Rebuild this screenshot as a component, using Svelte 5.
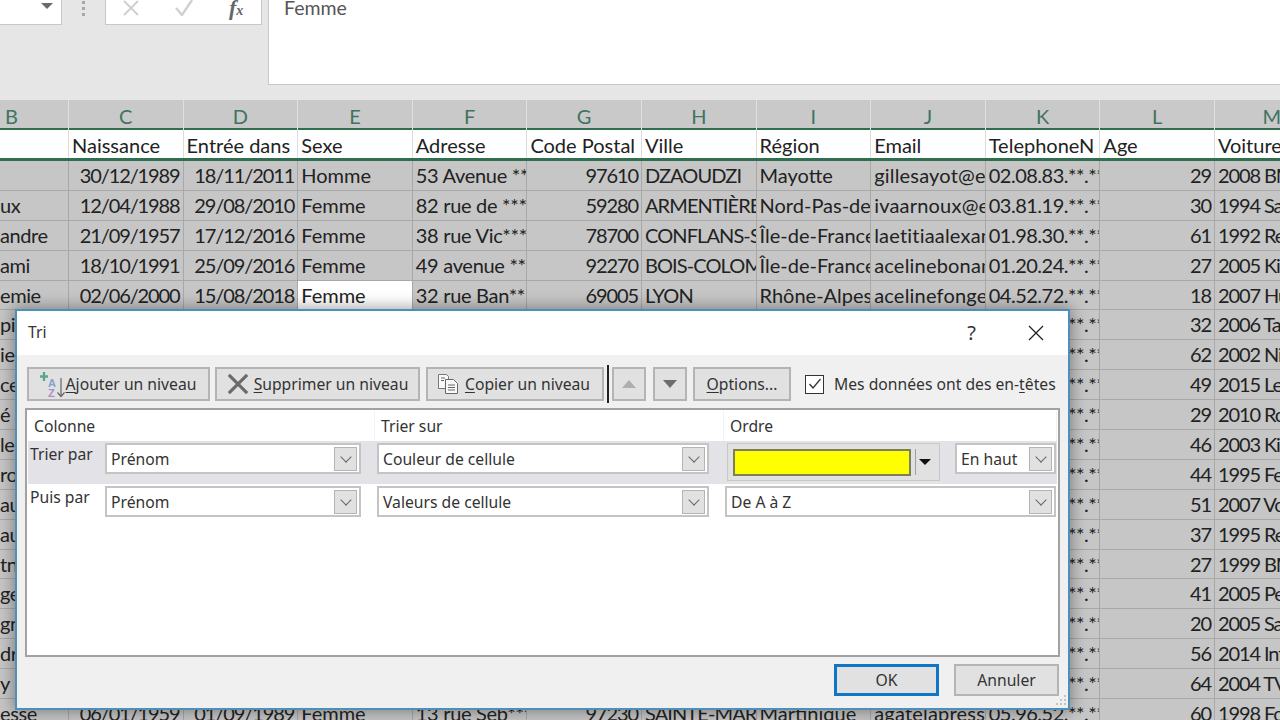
<script lang="ts">
  const cols = ['B', 'C', 'D', 'E', 'F', 'G', 'H', 'I', 'J', 'K', 'L', 'M'];
  const gridCols = '69px repeat(11, 114.6px)';

  const heads = ['', 'Naissance', 'Entrée dans', 'Sexe', 'Adresse', 'Code Postal', 'Ville', 'Région', 'Email', 'TelephoneN', 'Age', 'Voiture'];

  const rows = [
    ['', '30/12/1989', '18/11/2011', 'Homme', '53 Avenue ***', '97610', 'DZAOUDZI', 'Mayotte', 'gillesayot@example', '02.08.83.**.**', '29', '2008 BMW'],
    ['ux', '12/04/1988', '29/08/2010', 'Femme', '82 rue de ***', '59280', 'ARMENTIÈRES', 'Nord-Pas-de-Calais', 'ivaarnoux@example', '03.81.19.**.**', '30', '1994 Saab'],
    ['andre', '21/09/1957', '17/12/2016', 'Femme', '38 rue Vic***', '78700', 'CONFLANS-STE', 'Île-de-France', 'laetitiaalexandre', '01.98.30.**.**', '61', '1992 Renault'],
    ['ami', '18/10/1991', '25/09/2016', 'Femme', '49 avenue ***', '92270', 'BOIS-COLOMBES', 'Île-de-France', 'acelinebonami', '01.20.24.**.**', '27', '2005 Kia'],
    ['emie', '02/06/2000', '15/08/2018', 'Femme', '32 rue Ban**', '69005', 'LYON', 'Rhône-Alpes', 'acelinefongemie', '04.52.72.**.**', '18', '2007 Hummer'],
    ['pi', '', '', '', '', '', '', '', '', '02.00.00.**.**', '32', '2006 Tata'],
    ['ie', '', '', '', '', '', '', '', '', '02.00.00.**.**', '62', '2002 Nissan'],
    ['ce', '', '', '', '', '', '', '', '', '02.00.00.**.**', '49', '2015 Lexus'],
    ['é', '', '', '', '', '', '', '', '', '02.00.00.**.**', '29', '2010 Rover'],
    ['le', '', '', '', '', '', '', '', '', '02.00.00.**.**', '46', '2003 Kia'],
    ['ro', '', '', '', '', '', '', '', '', '02.00.00.**.**', '44', '1995 Ferrari'],
    ['au', '', '', '', '', '', '', '', '', '02.00.00.**.**', '51', '2007 Volvo'],
    ['au', '', '', '', '', '', '', '', '', '02.00.00.**.**', '37', '1995 Renault'],
    ['tn', '', '', '', '', '', '', '', '', '02.00.00.**.**', '27', '1999 BMW'],
    ['ge', '', '', '', '', '', '', '', '', '02.00.00.**.**', '41', '2005 Peugeot'],
    ['gn', '', '', '', '', '', '', '', '', '02.00.00.**.**', '20', '2005 Saab'],
    ['dr', '', '', '', '', '', '', '', '', '02.00.00.**.**', '56', '2014 Infiniti'],
    ['y', '', '', '', '', '', '', '', '', '02.00.00.**.**', '64', '2004 TVR'],
    ['esse', '06/01/1959', '01/09/1989', 'Femme', '13 rue Seb***', '97230', 'SAINTE-MARIE', 'Martinique', 'agatelapress', '05.96.52.**.**', '60', '1998 Ford']
  ];

  // right-aligned in the sheet; tight/narrow tweak the spacing to Calibri's widths
  const rightCols = [1, 2, 5, 10];
  const colSpacing: Record<number, string> = {
    0: 'sp-b',
    1: 'sp-digits',
    2: 'sp-digits',
    4: 'sp-addr',
    5: 'sp-digits',
    6: 'sp-city',
    8: 'sp-mail',
    9: 'sp-phone',
    10: 'sp-digits',
    11: 'sp-digits'
  };
</script>

<div class="screen">
  <div class="formula-bar">
    <div class="name-box"><span class="caret"></span></div>
    <div class="dots"><i></i><i></i><i></i></div>
    <div class="fx-box">
      <svg width="18" height="16" viewBox="0 0 18 16"><path d="M2 1l14 14M16 1L2 15" stroke="#d0d0d0" stroke-width="2" fill="none" /></svg>
      <svg width="20" height="16" viewBox="0 0 20 16"><path d="M2 8l6 7L18 0" stroke="#d0d0d0" stroke-width="2.4" fill="none" /></svg>
      <span class="fx">f<small>x</small></span>
    </div>
    <div class="formula-input">Femme</div>
  </div>

  <div class="sheet">
    <div class="col-heads" style="grid-template-columns: {gridCols}">
      {#each cols as c}
        <div class="col-head">{c}</div>
      {/each}
    </div>
    <div class="head-row" style="grid-template-columns: {gridCols}">
      {#each heads as h}
        <div class="cell">{h}</div>
      {/each}
    </div>
    {#each rows as row, r}
      <div class="row" style="grid-template-columns: {gridCols}">
        {#each row as val, c}
          <div
            class="cell {colSpacing[c] ?? ''}"
            class:right={rightCols.includes(c)}
            class:active={r === 4 && c === 3}
          >{val}</div>
        {/each}
      </div>
    {/each}
  </div>

  <div class="dialog">
    <div class="title-bar">
      <span class="title">Tri</span>
      <span class="help">?</span>
      <svg class="close" width="16" height="16" viewBox="0 0 16 16"><path d="M1 1l14 14M15 1L1 15" stroke="#222" stroke-width="1.3" fill="none" /></svg>
    </div>
    <div class="body">
      <div class="toolbar">
        <button class="btn add">
          <svg width="27" height="30" viewBox="0 0 27 30">
            <path d="M5 3v9M1 7.500h8" stroke="#5fa688" stroke-width="2.400" fill="none" />
            <text x="9" y="18" class="az a">A</text>
            <text x="9" y="28" class="az z">Z</text>
            <path d="M22 9v18M18.500 23.500l3.500 4 3.500-4" stroke="#666" stroke-width="1.200" fill="none" />
          </svg>
          <span><u>A</u>jouter un niveau</span>
        </button>
        <button class="btn del">
          <svg width="22" height="22" viewBox="0 0 24 24"><path d="M2 2l20 20M22 2L2 22" stroke="#6a6a6a" stroke-width="3.400" fill="none" /></svg>
          <span><u>S</u>upprimer un niveau</span>
        </button>
        <button class="btn copy">
          <svg width="24" height="22" viewBox="0 0 24 22">
            <path d="M1.500 1.500h8l2 2v12h-10z" fill="#fafafa" stroke="#777" />
            <path d="M8.500 6.500h8l4 4v10h-12z" fill="#fafafa" stroke="#666" />
            <path d="M11 12h7M11 14.500h7M11 17h7M4 5h4M4 7.500h3" stroke="#666" fill="none" />
          </svg>
          <span><u>C</u>opier un niveau</span>
        </button>
        <span class="caret-line"></span>
        <button class="btn arrow"><span class="tri up"></span></button>
        <button class="btn arrow"><span class="tri down"></span></button>
        <button class="btn options"><span><u>O</u>ptions...</span></button>
        <label class="check">
          <span class="box">
            <svg width="14" height="12" viewBox="0 0 14 12"><path d="M1.500 6l3.500 4 7.500-9" stroke="#333" stroke-width="1.300" fill="none" /></svg>
          </span>
          <span>Mes données ont des en-<u>t</u>êtes</span>
        </label>
      </div>

      <div class="panel">
        <div class="panel-head">
          <span>Colonne</span>
          <span>Trier sur</span>
          <span>Ordre</span>
        </div>
        <div class="level selected">
          <span class="level-name">Trier par</span>
          <div class="select"><span>Prénom</span><span class="drop"></span></div>
          <div class="select"><span>Couleur de cellule</span><span class="drop"></span></div>
          <div class="order">
            <div class="swatch-wrap">
              <div class="swatch"></div>
              <span class="sep"></span>
              <span class="tri black"></span>
            </div>
            <div class="select"><span>En haut</span><span class="drop"></span></div>
          </div>
        </div>
        <div class="level">
          <span class="level-name">Puis par</span>
          <div class="select"><span>Prénom</span><span class="drop"></span></div>
          <div class="select"><span>Valeurs de cellule</span><span class="drop"></span></div>
          <div class="select"><span>De A à Z</span><span class="drop"></span></div>
        </div>
      </div>

      <div class="footer">
        <button class="btn ok">OK</button>
        <button class="btn cancel">Annuler</button>
      </div>
    </div>
    <svg class="grip" width="14" height="14" viewBox="0 0 14 14" fill="#c4c4c4">
      <rect x="10" y="1" width="2" height="2" /><rect x="6" y="5" width="2" height="2" /><rect x="10" y="5" width="2" height="2" />
      <rect x="2" y="9" width="2" height="2" /><rect x="6" y="9" width="2" height="2" /><rect x="10" y="9" width="2" height="2" />
    </svg>
  </div>
</div>

<style>
  :global(body) {
    margin: 0;
    background: #e6e6e6;
  }
  .screen {
    position: relative;
    width: 1280px;
    height: 720px;
    overflow: hidden;
    font-family: "Lato", "Liberation Sans", sans-serif;
  }

  .formula-bar {
    height: 100px;
    background: #e6e6e6;
    display: flex;
    align-items: flex-start;
  }
  .name-box {
    width: 62px;
    height: 25px;
    background: #fff;
    border-right: 1px solid #c8c8c8;
    border-bottom: 1px solid #c8c8c8;
    box-sizing: border-box;
    position: relative;
  }
  .caret {
    position: absolute;
    right: 8px;
    top: 3px;
    border: 6px solid transparent;
    border-top: 6px solid #6a6a6a;
    border-bottom: 0;
  }
  .dots {
    width: 43px;
    display: flex;
    flex-direction: column;
    align-items: center;
    gap: 3px;
    padding-top: 1px;
  }
  .dots i {
    width: 3px;
    height: 3px;
    background: #a8a8a8;
  }
  .fx-box {
    width: 157px;
    height: 25px;
    background: #fff;
    border: 1px solid #c8c8c8;
    border-top: 0;
    box-sizing: border-box;
    display: flex;
    align-items: flex-start;
    padding-left: 16px;
  }
  .fx-box svg + svg {
    margin-left: 34px;
  }
  .fx {
    font-family: "Liberation Serif", serif;
    font-style: italic;
    font-weight: 700;
    font-size: 22px;
    line-height: 16px;
    color: #666;
    margin-left: 35px;
  }
  .fx small {
    font-size: 14px;
  }
  .formula-input {
    margin-left: 6px;
    flex: 1;
    height: 85px;
    background: #fff;
    border-left: 1px solid #c8c8c8;
    border-bottom: 1px solid #c8c8c8;
    box-sizing: border-box;
    padding-left: 15px;
    font-size: 19.500px;
    line-height: 16px;
    color: #555;
  }

  .col-heads,
  .head-row,
  .row {
    display: grid;
    width: 1400px;
  }
  .col-heads {
    height: 28px;
    background: #c9c9c9;
    border-bottom: 2px solid #2f6f50;
  }
  .col-head {
    text-align: center;
    font-size: 20px;
    line-height: 33px;
    color: #3f7460;
    border-right: 1px solid #e0e0e0;
    box-sizing: border-box;
  }
  .col-head:first-child {
    text-align: right;
    padding-right: 50px;
  }
  .head-row {
    height: 28px;
    background: #fff;
    border-bottom: 3px solid #2f6f50;
    color: #2b2b2b;
  }
  .head-row .cell {
    background: #fff;
    border-bottom: 0;
    border-right-color: #dcdcdc;
    line-height: 31px;
    height: 28px;
  }
  .row {
    height: 29.900px;
  }
  .cell {
    font-size: 20px;
    line-height: 28px;
    padding: 0 3px;
    color: #222;
    background: #c6c6c6;
    border-right: 1px solid #a8a8a8;
    border-bottom: 1px solid #a8a8a8;
    box-sizing: border-box;
    white-space: nowrap;
    overflow: hidden;
    min-width: 0;
  }
  .cell.right {
    text-align: right;
  }
  .sp-digits {
    letter-spacing: -1.100px;
  }
  .sp-phone {
    letter-spacing: -0.500px;
  }
  .sp-addr {
    letter-spacing: -0.300px;
  }
  .sp-city {
    letter-spacing: -0.900px;
  }
  .sp-mail {
    letter-spacing: 0.200px;
  }
  .cell.sp-b {
    padding-left: 0;
    letter-spacing: -0.400px;
  }
  .cell.active {
    background: #fff;
  }

  .dialog {
    position: absolute;
    left: 15px;
    top: 309px;
    width: 1055px;
    height: 401px;
    box-sizing: border-box;
    border: 2px solid #4d8fb8;
    background: #f0f0f0;
    box-shadow: 0 0 14px 2px rgba(0, 0, 0, 0.35);
    display: flex;
    flex-direction: column;
    font-family: "Noto Sans", "Open Sans", sans-serif;
    font-size: 15.700px;
    color: #333;
  }
  .title-bar {
    height: 44px;
    flex-shrink: 0;
    background: #fff;
    display: flex;
    align-items: center;
    padding: 0 25px 2px 11px;
    box-sizing: border-box;
  }
  .title {
    flex: 1;
  }
  .help {
    font-size: 20px;
    margin-right: 52px;
  }
  .close {
    margin-top: 2px;
    margin-right: -1px;
  }
  .body {
    flex: 1;
    display: flex;
    flex-direction: column;
    padding: 12px 8px 0 8px;
    min-height: 0;
  }
  .toolbar {
    display: flex;
    align-items: center;
    height: 34px;
    padding-left: 2px;
  }
  .btn {
    font: inherit;
    color: inherit;
    height: 34px;
    padding: 0;
    background: #e1e1e1;
    border: 2px solid #b4b4b4;
    box-sizing: border-box;
    display: flex;
    align-items: center;
    justify-content: center;
    white-space: nowrap;
  }
  .add {
    width: 183px;
    padding-right: 2px;
  }
  .del {
    width: 205px;
    margin-left: 5px;
    gap: 5px;
  }
  .copy {
    width: 178px;
    margin-left: 6px;
    gap: 4px;
    padding-right: 3px;
  }
  .caret-line {
    width: 2px;
    height: 38px;
    margin: 0 4px 0 3px;
    background: #222;
  }
  .arrow {
    width: 34px;
    margin-left: -1px;
  }
  .arrow + .arrow {
    margin-left: 7px;
  }
  .options {
    width: 98px;
    margin-left: 6px;
  }
  .tri {
    width: 0;
    height: 0;
    border-left: 7px solid transparent;
    border-right: 7px solid transparent;
  }
  .tri.up {
    border-bottom: 8px solid #aeaeae;
  }
  .tri.down {
    border-top: 8px solid #6d6d6d;
  }
  .tri.black {
    border-left-width: 6px;
    border-right-width: 6px;
    border-top: 6px solid #111;
    margin-left: 3px;
  }
  .check {
    display: flex;
    align-items: center;
    gap: 10px;
    margin-left: 14px;
    white-space: nowrap;
  }
  .box {
    width: 19px;
    height: 19px;
    box-sizing: border-box;
    border: 1px solid #333;
    background: #fff;
    display: flex;
    align-items: center;
    justify-content: center;
  }
  .panel {
    margin-top: 7px;
    height: 249px;
    flex-shrink: 0;
    background: #fff;
    border: 2px solid #a2a2a2;
    box-sizing: border-box;
    padding: 1px;
  }
  .panel-head {
    display: grid;
    grid-template-columns: 347px 349px 1fr;
    height: 30px;
    align-items: center;
  }
  .panel-head span {
    padding-left: 6px;
    height: 100%;
    line-height: 30px;
    border-right: 1px solid #f2f2f2;
    box-sizing: border-box;
  }
  .level {
    display: grid;
    grid-template-columns: 61px 256px 332px 331px;
    column-gap: 16px;
    height: 43.400px;
    padding-top: 2px;
    box-sizing: border-box;
  }
  .level.selected {
    background: #e2e2e7;
  }
  .level-name {
    padding-left: 2px;
    line-height: 23px;
    white-space: nowrap;
  }
  .select {
    height: 31px;
    background: #fff;
    border: 2px solid #c4c4c4;
    box-sizing: border-box;
    display: flex;
    align-items: center;
    justify-content: space-between;
    padding-left: 4px;
    padding-right: 2px;
  }
  .drop {
    width: 23px;
    height: 24px;
    box-sizing: border-box;
    background: #e1e1e1;
    border: 1px solid #b4b4b4;
    position: relative;
    flex-shrink: 0;
  }
  .drop::after {
    content: '';
    position: absolute;
    left: 6.500px;
    top: 5px;
    width: 7px;
    height: 7px;
    border-right: 1px solid #666;
    border-bottom: 1px solid #666;
    transform: rotate(45deg);
  }
  .order {
    display: flex;
    justify-content: space-between;
    margin-left: 2px;
  }
  .swatch-wrap {
    width: 213px;
    height: 38px;
    box-sizing: border-box;
    border: 1px solid #c8c8c8;
    background: #e1e1e1;
    display: flex;
    align-items: center;
    padding-left: 5px;
  }
  .swatch {
    width: 178px;
    height: 27px;
    box-sizing: border-box;
    background: #ffff00;
    border: 2px solid #7d7d60;
  }
  .sep {
    width: 1px;
    height: 26px;
    background: #a0a0a0;
    margin-left: 4px;
  }
  .order .select {
    width: 101px;
  }
  .footer {
    display: flex;
    justify-content: flex-end;
    gap: 15px;
    margin-top: 7px;
    padding-right: 1px;
  }
  .footer .btn {
    width: 105px;
    height: 32px;
  }
  .ok {
    border: 3px solid #0f76c6;
  }
  .grip {
    position: absolute;
    right: 0;
    bottom: 0;
  }
  .az {
    font-family: "Liberation Sans", sans-serif;
    font-size: 11px;
    font-weight: 700;
  }
  .az.a {
    fill: #7ea3d0;
  }
  .az.z {
    fill: #a890c8;
  }
  u {
    text-underline-offset: 2px;
  }
</style>
